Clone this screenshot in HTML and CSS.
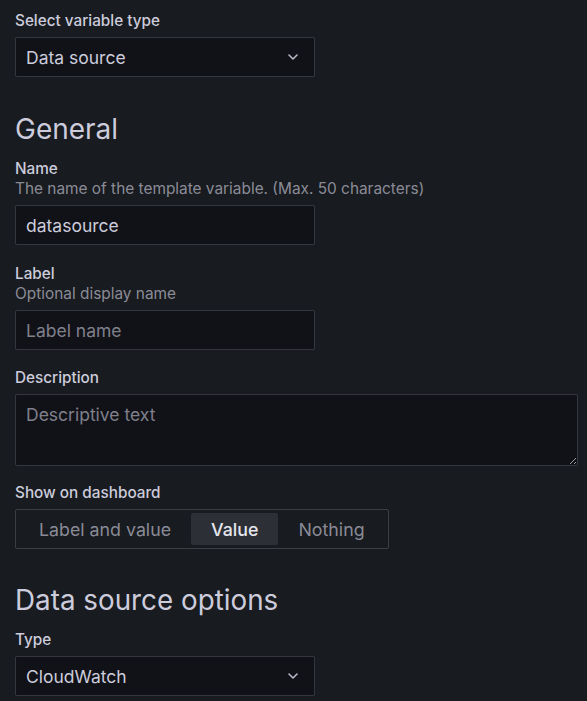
FILE: index.html
```html
<!DOCTYPE html>
<html lang="en">
<head>
<meta charset="utf-8">
<title>Variable settings</title>
<link rel="stylesheet" href="styles.css">
</head>
<body>
<form class="editor">
  <div class="field field-top">
    <label class="label">Select variable type</label>
    <div class="select">
      <span class="select-value">Data source</span>
      <svg class="chevron" width="10" height="6" viewBox="0 0 10 6"><path d="M1 1 L5 5 L9 1" fill="none" stroke="currentColor" stroke-width="1.6" stroke-linecap="round" stroke-linejoin="round"/></svg>
    </div>
  </div>

  <h3 class="section-title">General</h3>

  <div class="field field-name">
    <label class="label">Name</label>
    <div class="desc">The name of the template variable. (Max. 50 characters)</div>
    <input class="input" type="text" value="datasource">
  </div>

  <div class="field">
    <label class="label">Label</label>
    <div class="desc">Optional display name</div>
    <input class="input" type="text" placeholder="Label name">
  </div>

  <div class="field field-description">
    <label class="label">Description</label>
    <textarea class="textarea" placeholder="Descriptive text"></textarea>
  </div>

  <div class="field">
    <label class="label">Show on dashboard</label>
    <div class="radio-group">
      <span class="radio">Label and value</span>
      <span class="radio active">Value</span>
      <span class="radio">Nothing</span>
    </div>
  </div>

  <h3 class="section-title section-title-2">Data source options</h3>

  <div class="field">
    <label class="label">Type</label>
    <div class="select">
      <span class="select-value">CloudWatch</span>
      <svg class="chevron" width="10" height="6" viewBox="0 0 10 6"><path d="M1 1 L5 5 L9 1" fill="none" stroke="currentColor" stroke-width="1.6" stroke-linecap="round" stroke-linejoin="round"/></svg>
    </div>
  </div>
</form>
</body>
</html>
```

FILE: styles.css
```css
html, body {
  margin: 0;
  padding: 0;
  background: #181b1f;
  color: #ccccdc;
  font-family: Inter, "Noto Sans", sans-serif;
}

.editor {
  padding: 11px 15px 0 15px;
  display: flex;
  flex-direction: column;
}

.field {
  display: flex;
  flex-direction: column;
  align-items: flex-start;
  margin-bottom: 18px;
}

.field-name {
  margin-bottom: 19px;
}

.field-description {
  margin-bottom: 17px;
}

.label {
  font-size: 15.3px;
  font-weight: 500;
  line-height: 20px;
  color: #ccccdc;
  margin-bottom: 6px;
}

.desc {
  font-size: 15.4px;
  line-height: 20px;
  color: rgba(204, 204, 220, 0.65);
  margin-top: -6px;
  margin-bottom: 6px;
}

.select,
.input,
.textarea {
  box-sizing: border-box;
  background: #111217;
  border: 1px solid rgba(204, 204, 220, 0.2);
  border-radius: 2px;
  color: #ccccdc;
  font-family: Inter, "Noto Sans", sans-serif;
  font-size: 17.5px;
}

.select {
  width: 300px;
  height: 40px;
  display: flex;
  align-items: center;
  justify-content: space-between;
  padding: 0 16px 0 10px;
}

.chevron {
  color: #b8b8c8;
}

.input {
  width: 300px;
  height: 40px;
  padding: 0 10px;
  outline: none;
}

.input::placeholder,
.textarea::placeholder {
  color: rgba(204, 204, 220, 0.6);
}

.textarea {
  width: 563px;
  height: 72px;
  padding: 9px 10px;
  resize: vertical;
  color-scheme: dark;
  outline: none;
  line-height: 22px;
}

.section-title {
  margin: 17px 0 13px 0;
  font-size: 28px;
  font-weight: 400;
  line-height: 34px;
  color: #ccccdc;
}

.section-title-2 {
  margin-top: 16px;
  font-size: 27.8px;
}

.radio-group {
  display: flex;
  gap: 0;
  padding: 3px;
  border: 1px solid rgba(204, 204, 220, 0.2);
  border-radius: 2px;
  box-sizing: border-box;
  height: 40px;
}

.radio {
  display: flex;
  align-items: center;
  padding: 0 20px;
  font-size: 17.8px;
  color: rgba(204, 204, 220, 0.65);
  border-radius: 2px;
}

.radio.active {
  background: #2c2f35;
  color: #e6e6ef;
  font-weight: 500;
}
```
